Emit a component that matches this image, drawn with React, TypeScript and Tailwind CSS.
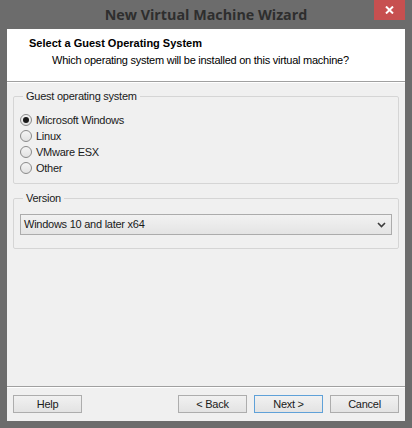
import React from "react";

const font = { fontFamily: '"Liberation Sans", Arial, sans-serif' };

function Radio({ label, checked }: { label: string; checked?: boolean }) {
  return (
    <div className="flex h-[16px] items-center">
      <div className="flex h-[12px] w-[12px] items-center justify-center rounded-full border border-[#8a8a8a] bg-gradient-to-b from-[#f4f4f4] to-[#e2e2e2]">
        {checked && <div className="h-[6px] w-[6px] rounded-full bg-[#1a1a1a]" />}
      </div>
      <span className="ml-[4px] text-[11px] leading-[13px] text-[#1a1a1a]">{label}</span>
    </div>
  );
}

function Btn({ label, def }: { label: string; def?: boolean }) {
  return (
    <div
      className={`flex h-[18px] w-[69px] items-center justify-center border bg-gradient-to-b from-[#f1f1f1] to-[#e3e3e3] text-[11px] leading-[13px] text-[#1a1a1a] ${
        def ? "border-[#5fa1d8]" : "border-[#adadad]"
      }`}
    >
      {label}
    </div>
  );
}

export default function App() {
  return (
    <div className="flex h-[428px] w-[412px] flex-col bg-[#6c6c6c] tracking-[-0.25px]" style={font}>
      {/* title bar */}
      <div className="relative flex h-[29px] items-center justify-center">
        <span
          className="text-[14.3px] font-bold leading-[18px] tracking-normal text-[#2e2e2e]"
          style={{ fontFamily: '"Open Sans", "Noto Sans", sans-serif' }}
        >
          New Virtual Machine Wizard
        </span>
        <div className="absolute right-[7px] top-0 flex h-[20px] w-[31px] items-center justify-center bg-[#c75050]">
          <svg width="9" height="8" viewBox="0 0 9 8">
            <path d="M1 0.5 L8 7.5 M8 0.5 L1 7.5" stroke="#ffffff" strokeWidth="2" />
          </svg>
        </div>
      </div>

      {/* client area */}
      <div className="mx-[7px] flex flex-1 flex-col bg-[#f0f0f0]">
        {/* header */}
        <div className="h-[52px] bg-white pl-[22px] pt-[7px]">
          <div className="text-[11px] font-bold leading-[14px] tracking-normal text-black">
            Select a Guest Operating System
          </div>
          <div className="ml-[23px] mt-[3px] text-[11px] leading-[14px] text-black">
            Which operating system will be installed on this virtual machine?
          </div>
        </div>
        <div className="h-px bg-[#a0a0a0]" />
        <div className="h-px bg-white" />

        {/* body */}
        <div className="flex flex-1 flex-col px-[6px] pt-[7px]">
          <fieldset className="rounded-[2px] border border-[#d5d5d5] px-[6px] pb-[7px] pt-[9px]">
            <legend className="ml-[3px] px-[3px] text-[11px] leading-[13px] text-[#1a1a1a]">
              Guest operating system
            </legend>
            <Radio label="Microsoft Windows" checked />
            <Radio label="Linux" />
            <Radio label="VMware ESX" />
            <Radio label="Other" />
          </fieldset>

          <fieldset className="mt-[8px] rounded-[2px] border border-[#d5d5d5] px-[6px] pb-[13px] pt-[9px]">
            <legend className="ml-[3px] px-[3px] text-[11px] leading-[13px] text-[#1a1a1a]">Version</legend>
            <div className="flex h-[21px] items-center justify-between border border-[#acacac] bg-gradient-to-b from-[#f2f2f2] to-[#e4e4e4] pl-[3px] pr-[5px]">
              <span className="text-[11px] leading-[13px] text-[#1a1a1a]">Windows 10 and later x64</span>
              <svg width="9" height="6" viewBox="0 0 9 6">
                <path d="M1 1 L4.5 4.5 L8 1" stroke="#3c3c3c" strokeWidth="1.6" fill="none" />
              </svg>
            </div>
          </fieldset>
        </div>

        <div className="h-px bg-[#a0a0a0]" />
        <div className="h-px bg-white" />
        {/* buttons */}
        <div className="flex h-[33px] items-center px-[6px] pb-[1px]">
          <Btn label="Help" />
          <div className="flex-1" />
          <div className="flex gap-[7px]">
            <Btn label="< Back" />
            <Btn label="Next >" def />
            <Btn label="Cancel" />
          </div>
        </div>
      </div>
      <div className="h-[7px]" />
    </div>
  );
}
